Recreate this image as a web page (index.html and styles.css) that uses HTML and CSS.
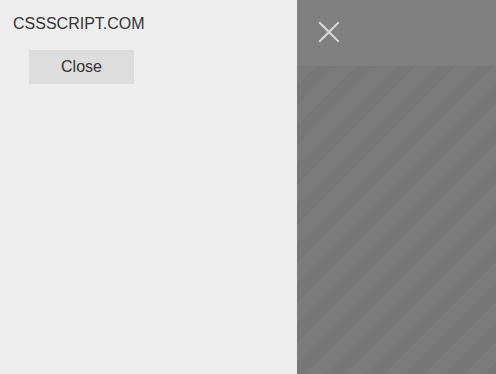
FILE: index.html
```html
<!DOCTYPE html>
<html>
<head>
<meta charset="utf-8">
<link rel="stylesheet" href="styles.css">
</head>
<body>
<div class="page">
  <aside class="panel">
    <div class="brand">CSSSCRIPT.COM</div>
    <button class="close-btn">Close</button>
  </aside>
  <main class="overlay">
    <header class="overlay-head">
      <svg class="x-icon" width="22" height="22" viewBox="0 0 22 22">
        <path d="M2 2 L20 20 M20 2 L2 20" stroke="#d6d6d6" stroke-width="2.2" stroke-linecap="square" fill="none"/>
      </svg>
    </header>
    <div class="overlay-body"></div>
  </main>
</div>
</body>
</html>
```
FILE: styles.css
```css
html, body {
  margin: 0;
  padding: 0;
  height: 100%;
}
body {
  font-family: "Liberation Sans", Arial, sans-serif;
  background: #eeeeee;
}
.page {
  display: flex;
  height: 374px;
}
.panel {
  width: 297px;
  flex: none;
  background: #eeeeee;
  padding: 15px 0 0 13px;
  box-sizing: border-box;
}
.brand {
  font-size: 16px;
  color: #333;
  line-height: 18px;
}
.close-btn {
  display: block;
  margin: 17px 0 0 16px;
  width: 105px;
  height: 34px;
  border: none;
  background: #dddddd;
  color: #333;
  font-family: "Liberation Sans", Arial, sans-serif;
  font-size: 16px;
  padding: 0;
}
.overlay {
  flex: 1;
  display: flex;
  flex-direction: column;
  box-shadow: inset 5px 0 3px -3px rgba(0,0,0,0.06);
}
.overlay-head {
  height: 66px;
  background: #808080;
  padding: 21px 0 0 21px;
  box-sizing: border-box;
}
.x-icon {
  display: block;
}
.overlay-body {
  flex: 1;
  background: repeating-linear-gradient(135deg, #7b7b7b 0 14px, #777777 14px 28px);
}
```
